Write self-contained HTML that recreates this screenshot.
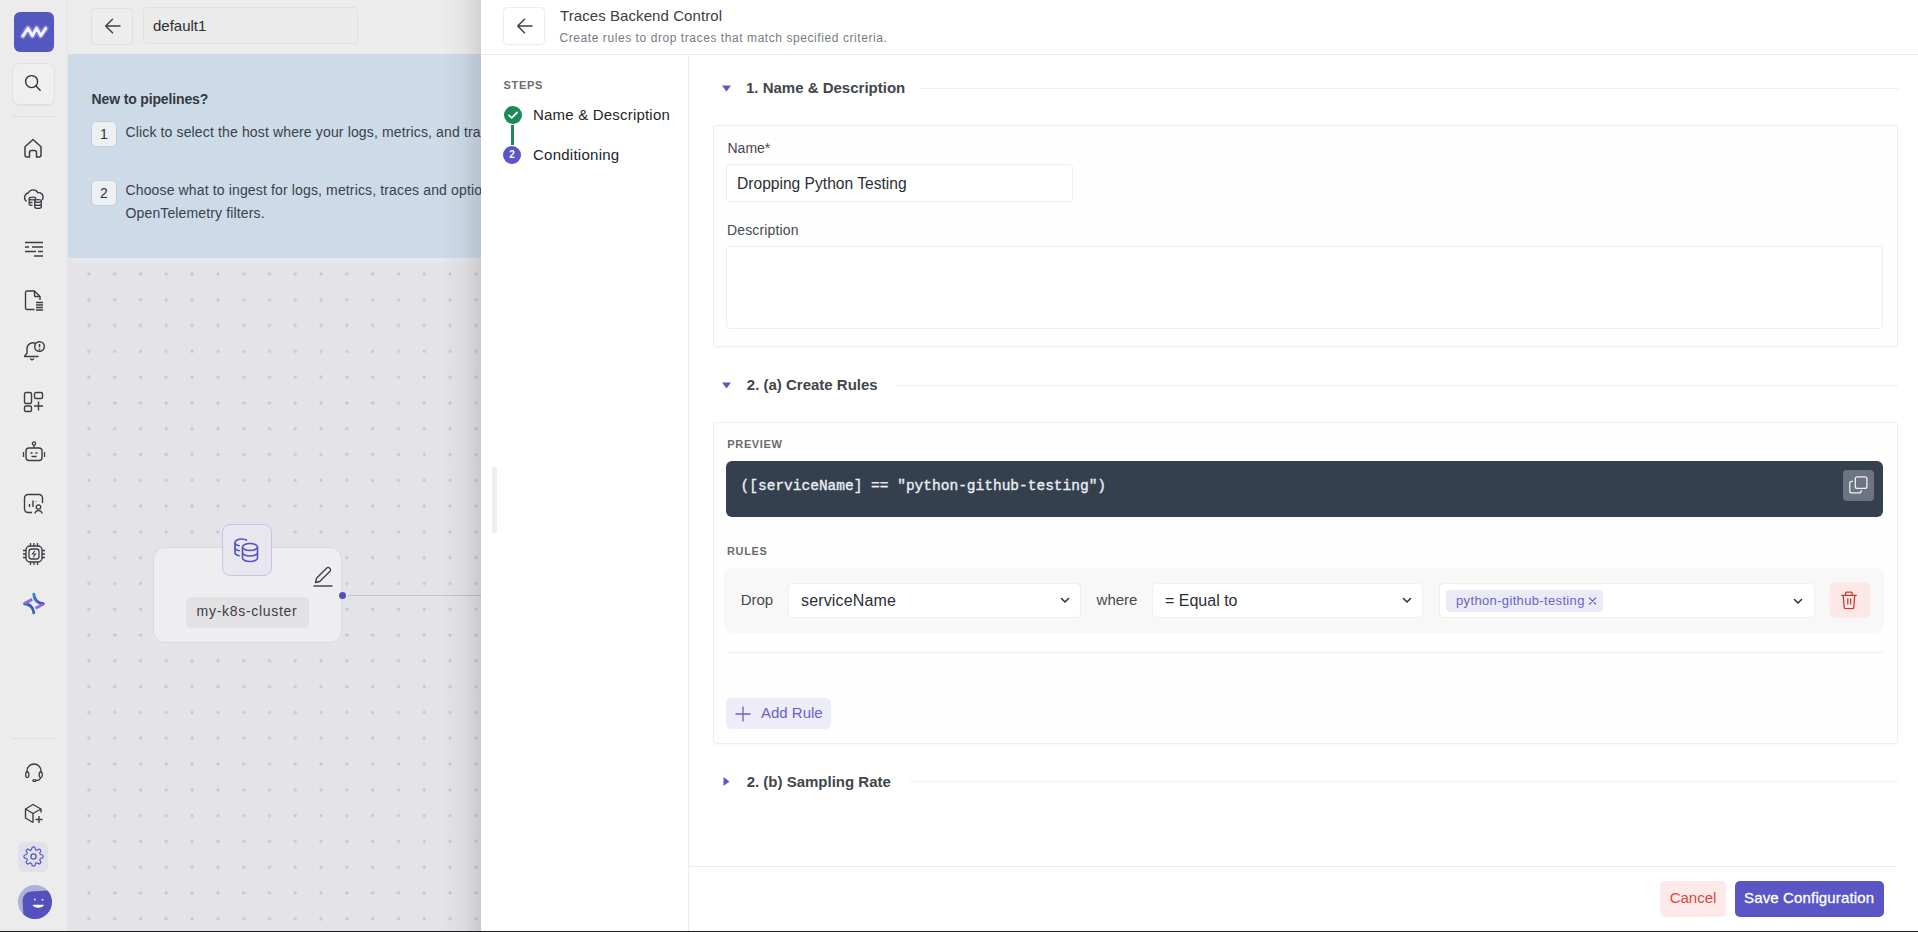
<!DOCTYPE html>
<html><head><meta charset="utf-8">
<style>
*{box-sizing:border-box;margin:0;padding:0}
html,body{width:1918px;height:932px;overflow:hidden;background:#fff;font-family:"Liberation Sans",sans-serif;color:#2b2f36}
.abs{position:absolute}
#side{left:0;top:0;width:68px;height:932px;background:#ececec;border-right:1px solid #e2e2e2}
#hdr{left:68px;top:0;width:413px;height:54px;background:#ececec}
#banner{left:68px;top:54px;width:413px;height:204px;background:#cddbe8}
#canvas{left:68px;top:258px;width:413px;height:674px;background-color:#e4e3e8;
 background-image:radial-gradient(circle,#c7c7cd 1.3px,transparent 1.9px);background-size:25.8px 25.8px;background-position:8px 3px}
#shadow{left:441px;top:0;width:40px;height:932px;background:linear-gradient(to right,rgba(0,0,0,0),rgba(0,0,0,0.03) 50%,rgba(0,0,0,0.11))}
#drawer{left:481px;top:0;width:1437px;height:932px;background:#fff}
.t{position:absolute;white-space:pre;line-height:1}
</style></head><body>
<div id="side" class="abs"></div>
<div id="hdr" class="abs"></div>
<div id="banner" class="abs"></div>
<div id="canvas" class="abs"></div>

<!-- sidebar -->
<div class="abs" style="left:14px;top:12px;width:40px;height:40px;border-radius:6px;background:#5557c0"></div>
<svg class="abs" style="left:14px;top:12px" width="40" height="40" viewBox="0 0 40 40"><path d="M9 24L14 16.2l4.3 7.5 4.3-7.5 4.2 7.5 4.9-7.3" fill="none" stroke="#8f8de0" stroke-width="6" stroke-linecap="round" stroke-linejoin="round" opacity="0.75"/><path d="M9 24L14 16.2l4.3 7.5 4.3-7.5 4.2 7.5 4.9-7.3" fill="none" stroke="#f4f5ff" stroke-width="2.9" stroke-linecap="round" stroke-linejoin="round"/></svg>
<div class="abs" style="left:12px;top:63px;width:43px;height:42px;border-radius:7px;background:#efefef;border:1px solid #e0e0e0;box-shadow:0 1px 1px rgba(0,0,0,0.04)"></div>
<svg class="abs" style="left:23px;top:73px" width="20" height="20" viewBox="0 0 20 20"><circle cx="8.6" cy="8.6" r="6" fill="none" stroke="#2e3138" stroke-width="1.4"/><path d="M13 13l4.2 4.2" stroke="#2e3138" stroke-width="1.4" stroke-linecap="round"/></svg>
<div class="abs" style="left:12px;top:116px;width:44px;height:1px;background:#dedede"></div>
<svg class="abs" style="left:23px;top:138px" width="20" height="20" viewBox="0 0 20 20"><path d="M2 8.8L10 1.5l8 7.3V17a2 2 0 0 1-2 2h-2.5v-4.5a2 2 0 0 0-2-2h-3a2 2 0 0 0-2 2V19H4a2 2 0 0 1-2-2z" fill="none" stroke="#3a3d44" stroke-width="1.5" stroke-linejoin="round"/></svg>
<svg class="abs" style="left:23px;top:188px" width="22" height="22" viewBox="0 0 22 22"><path d="M3.5 13.5A4.8 4.8 0 0 1 5.2 5 5.5 5.5 0 0 1 15 4.8a4 4 0 0 1 5 4.2 3.8 3.8 0 0 1-1 3" fill="none" stroke="#3a3d44" stroke-width="1.4"/><ellipse cx="9.5" cy="10.5" rx="3.3" ry="1.4" fill="#ececec" stroke="#3a3d44" stroke-width="1.3"/><path d="M6.2 10.5v5.5c0 .8 1.5 1.4 3.3 1.4M6.2 13.2c0 .8 1.5 1.4 3.3 1.4" fill="none" stroke="#3a3d44" stroke-width="1.3"/><ellipse cx="15" cy="13" rx="3.3" ry="1.4" fill="#ececec" stroke="#3a3d44" stroke-width="1.3"/><path d="M11.7 13v6c0 .8 1.5 1.4 3.3 1.4s3.3-.6 3.3-1.4v-6M11.7 16c0 .8 1.5 1.4 3.3 1.4s3.3-.6 3.3-1.4" fill="none" stroke="#3a3d44" stroke-width="1.3"/></svg>
<svg class="abs" style="left:24px;top:240px" width="20" height="20" viewBox="0 0 20 20"><path d="M1 2.5h18M1 7h4M8 7h11M1 11.5h11M14 11.5h5M10 16h9" fill="none" stroke="#3a3d44" stroke-width="1.5"/></svg>
<svg class="abs" style="left:24px;top:290px" width="20" height="22" viewBox="0 0 20 22"><path d="M10.5 19.5H3a1.5 1.5 0 0 1-1.5-1.5V2.5A1.5 1.5 0 0 1 3 1h7.5l5.5 5.5V10M10.5 1v4.5a1 1 0 0 0 1 1H16" fill="none" stroke="#3a3d44" stroke-width="1.4" stroke-linejoin="round"/><path d="M12 12.5h7M12 15h7M12 17.5h7M12 20h7" stroke="#3a3d44" stroke-width="1.3"/></svg>
<svg class="abs" style="left:22px;top:340px" width="24" height="22" viewBox="0 0 24 22"><path d="M13.5 3.3A6 6 0 0 0 5 8.5v4.5L2.5 16.5h14" fill="none" stroke="#3a3d44" stroke-width="1.4" stroke-linejoin="round"/><path d="M8 18.5l2 1.5 2-1.5" fill="none" stroke="#3a3d44" stroke-width="1.3"/><circle cx="17.5" cy="6.5" r="4.8" fill="none" stroke="#3a3d44" stroke-width="1.4"/><path d="M17.5 4v3.3" stroke="#3a3d44" stroke-width="1.5"/><circle cx="17.5" cy="9.2" r=".8" fill="#3a3d44"/></svg>
<svg class="abs" style="left:23px;top:391px" width="22" height="22" viewBox="0 0 22 22"><rect x="1.5" y="1.5" width="7" height="11" rx="1.5" fill="none" stroke="#3a3d44" stroke-width="1.4"/><rect x="11.5" y="1.5" width="8" height="6" rx="1.5" fill="none" stroke="#3a3d44" stroke-width="1.4"/><rect x="1.5" y="15" width="7" height="5.5" rx="1.5" fill="none" stroke="#3a3d44" stroke-width="1.4"/><path d="M15.5 10.5v9M11 15h9" stroke="#3a3d44" stroke-width="1.4"/></svg>
<svg class="abs" style="left:22px;top:441px" width="24" height="22" viewBox="0 0 24 22"><circle cx="12" cy="2.5" r="1.6" fill="none" stroke="#3a3d44" stroke-width="1.3"/><path d="M12 4v3" stroke="#3a3d44" stroke-width="1.3"/><rect x="4" y="7" width="16" height="12.5" rx="3" fill="none" stroke="#3a3d44" stroke-width="1.4"/><path d="M1.5 11v5M22.5 11v5M8.5 12h2M13.5 12h2M9.5 15.5h5" stroke="#3a3d44" stroke-width="1.3"/></svg>
<svg class="abs" style="left:23px;top:493px" width="22" height="22" viewBox="0 0 22 22"><path d="M9 19.5H5a3.5 3.5 0 0 1-3.5-3.5V5A3.5 3.5 0 0 1 5 1.5h11A3.5 3.5 0 0 1 19.5 5v5" fill="none" stroke="#3a3d44" stroke-width="1.4"/><path d="M6.5 14v-3M10 14V7.5M13 8v.5" stroke="#3a3d44" stroke-width="1.4"/><circle cx="15.5" cy="14" r="2.2" fill="none" stroke="#3a3d44" stroke-width="1.3"/><path d="M11.8 20.5a3.8 3.8 0 0 1 7.4 0" fill="none" stroke="#3a3d44" stroke-width="1.3"/></svg>
<svg class="abs" style="left:22px;top:542px" width="24" height="24" viewBox="0 0 24 24"><rect x="4" y="4" width="16" height="16" rx="4" fill="none" stroke="#3a3d44" stroke-width="1.4"/><rect x="7" y="7" width="10" height="10" rx="2.5" fill="none" stroke="#3a3d44" stroke-width="1.3"/><path d="M12.8 8.8L10.5 12h3l-2.3 3.2" fill="none" stroke="#3a3d44" stroke-width="1.1"/><path d="M8.5 1v3M12 1v3M15.5 1v3M8.5 20v3M12 20v3M15.5 20v3M1 8.5h3M1 12h3M1 15.5h3M20 8.5h3M20 12h3M20 15.5h3" stroke="#3a3d44" stroke-width="1.3"/></svg>
<svg class="abs" style="left:18px;top:588px" width="32" height="32" viewBox="0 0 32 32"><defs><linearGradient id="g1" x1="0" y1="0" x2="1" y2="1"><stop offset="0" stop-color="#2f86d8"/><stop offset="1" stop-color="#5a3fb8"/></linearGradient><linearGradient id="g2" x1="1" y1="0" x2="0" y2="1"><stop offset="0" stop-color="#4a3fb8"/><stop offset="1" stop-color="#2f86d8"/></linearGradient></defs><path d="M15.8 6.2Q16.5 14.8 25.2 15.8" fill="none" stroke="url(#g1)" stroke-width="2.9" stroke-linecap="round"/><path d="M25 16.2L17.6 20.2" fill="none" stroke="#8b6fd6" stroke-width="2.9"/><path d="M6.6 15.8Q15 16.8 15.8 24.8" fill="none" stroke="url(#g2)" stroke-width="2.9" stroke-linecap="round"/><path d="M6.8 15.4L14.2 11.4" fill="none" stroke="#8b6fd6" stroke-width="2.9"/></svg>
<div class="abs" style="left:12px;top:738px;width:44px;height:1px;background:#dedede"></div>
<svg class="abs" style="left:24px;top:762px" width="20" height="20" viewBox="0 0 20 20"><path d="M3 11V9a7 7 0 0 1 14 0v2" fill="none" stroke="#3a3d44" stroke-width="1.4"/><rect x="1.8" y="10" width="3" height="5.5" rx="1.5" fill="none" stroke="#3a3d44" stroke-width="1.3"/><rect x="15.2" y="10" width="3" height="5.5" rx="1.5" fill="none" stroke="#3a3d44" stroke-width="1.3"/><path d="M16.5 15.5c0 2-2 3-5 3" fill="none" stroke="#3a3d44" stroke-width="1.3"/><ellipse cx="10.3" cy="18.5" rx="1.5" ry="1" fill="none" stroke="#3a3d44" stroke-width="1.2"/></svg>
<svg class="abs" style="left:24px;top:803px" width="20" height="21" viewBox="0 0 20 21"><path d="M17 9.5V6L9 1.5 1.5 6v9L9 19.5" fill="none" stroke="#3a3d44" stroke-width="1.4" stroke-linejoin="round"/><path d="M1.5 6L9 10.5 17 6M9 10.5v9" fill="none" stroke="#3a3d44" stroke-width="1.4" stroke-linejoin="round"/><path d="M15 13v7M11.5 16.5h7" stroke="#3a3d44" stroke-width="1.4"/></svg>
<div class="abs" style="left:18px;top:842px;width:30px;height:30px;border-radius:6px;background:#e2e1e9"></div>
<svg class="abs" style="left:23px;top:846px" width="21" height="21" viewBox="0 0 24 24"><path d="M12 15a3 3 0 1 0 0-6 3 3 0 0 0 0 6z" fill="none" stroke="#5a55c8" stroke-width="1.5"/><path d="M19.4 15a1.65 1.65 0 0 0 .33 1.82l.06.06a2 2 0 0 1-2.83 2.83l-.06-.06a1.65 1.65 0 0 0-1.82-.33 1.65 1.65 0 0 0-1 1.51V21a2 2 0 0 1-4 0v-.09A1.65 1.65 0 0 0 9 19.4a1.65 1.65 0 0 0-1.82.33l-.06.06a2 2 0 0 1-2.83-2.83l.06-.06A1.65 1.65 0 0 0 4.68 15a1.65 1.65 0 0 0-1.51-1H3a2 2 0 0 1 0-4h.09A1.650 1.65 0 0 0 4.6 9a1.65 1.65 0 0 0-.33-1.82l-.06-.06a2 2 0 0 1 2.830-2.83l.06.06A1.65 1.65 0 0 0 9 4.68a1.65 1.65 0 0 0 1-1.51V3a2 2 0 0 1 4 0v.09a1.65 1.65 0 0 0 1 1.51 1.65 1.65 0 0 0 1.82-.33l.06-.06a2 2 0 0 1 2.83 2.83l-.06.06A1.65 1.65 0 0 0 19.4 9a1.65 1.65 0 0 0 1.51 1H21a2 2 0 0 1 0 4h-.09a1.65 1.65 0 0 0-1.51 1z" fill="none" stroke="#5a55c8" stroke-width="1.4"/></svg>
<div class="abs" style="left:18px;top:885px;width:34px;height:34px;border-radius:50%;background:#aeb0d8;overflow:hidden"><div style="position:absolute;left:5px;top:6px;width:34px;height:34px;border-radius:9px;background:#5450bd;transform:rotate(-3deg)"></div></div>
<svg class="abs" style="left:18px;top:885px" width="34" height="34" viewBox="0 0 34 34"><circle cx="16.8" cy="14.5" r="1" fill="#e8e8f8"/><circle cx="24.5" cy="14.8" r="1" fill="#e8e8f8"/><path d="M15.3 20.3c2.7 2.6 7.3 2.6 10 0z" fill="#fff" stroke="#fff" stroke-width="1.2" stroke-linejoin="round"/></svg>
<!-- top header -->
<div class="abs" style="left:91px;top:8px;width:42px;height:37px;border-radius:4px;border:1px solid #e0e0e0;background:#ededed"></div>
<svg class="abs" style="left:104px;top:17px" width="18" height="18" viewBox="0 0 18 18"><path d="M16 9H2M8.5 2.2L1.7 9l6.8 6.8" fill="none" stroke="#3d4148" stroke-width="1.5" stroke-linecap="round" stroke-linejoin="round"/></svg>
<div class="abs" style="left:143px;top:7px;width:215px;height:37px;border-radius:4px;border:1px solid #e0e0e0;background:#ebebeb"></div>
<div class="t" style="left:153px;top:18.3px;font-size:15px;color:#2a2d33">default1</div>
<!-- banner -->
<div class="t" style="left:91.6px;top:92.1px;font-size:14px;font-weight:700;color:#343942;letter-spacing:-0.15px">New to pipelines?</div>
<div class="abs" style="left:91px;top:121px;width:26px;height:26px;border-radius:5px;border:1px solid #c9ced6;background:#edf0f3;font-size:14px;color:#2d3138;text-align:center;line-height:24px">1</div>
<div class="t" style="left:125.5px;top:125.1px;font-size:14px;color:#3a414b;letter-spacing:0.14px">Click to select the host where your logs, metrics, and traces are collected.</div>
<div class="abs" style="left:91px;top:180px;width:26px;height:26px;border-radius:5px;border:1px solid #c9ced6;background:#edf0f3;font-size:14px;color:#2d3138;text-align:center;line-height:24px">2</div>
<div class="t" style="left:125.5px;top:183.1px;font-size:14px;color:#3a414b;letter-spacing:0.14px">Choose what to ingest for logs, metrics, traces and optional</div>
<div class="t" style="left:125.5px;top:206.1px;font-size:14px;color:#3a414b;letter-spacing:0.14px">OpenTelemetry filters.</div>
<!-- canvas node -->
<div class="abs" style="left:348px;top:594.5px;width:133px;height:1.3px;background:#c3c3cc"></div>
<div class="abs" style="left:153px;top:547px;width:189px;height:96px;border-radius:12px;border:1px solid #d9d9e2;background:#eeeef0"></div>
<div class="abs" style="left:222px;top:524px;width:50px;height:52px;border-radius:8px;border:1px solid #c8c5e3;background:#e8e7ef"></div>
<svg class="abs" style="left:233px;top:536px" width="28" height="28" viewBox="0 0 28 28"><path d="M14 4.5c-1.2-.9-3-1.5-5-1.5C5.1 3 2 4.6 2 6.5v10c0 1.6 2 2.9 4.8 3.3" fill="none" stroke="#5450bd" stroke-width="1.6"/><path d="M2 11.5c0 1.6 2 2.9 4.8 3.3M2 6.5c0 1.6 2 2.9 4.8 3.3" fill="none" stroke="#5450bd" stroke-width="1.6"/><ellipse cx="17" cy="11" rx="7.5" ry="3.5" fill="#e8e7ef" stroke="#5450bd" stroke-width="1.6"/><path d="M9.5 11v11c0 1.9 3.4 3.5 7.5 3.5s7.5-1.6 7.5-3.5V11M9.5 16.5c0 1.9 3.4 3.5 7.5 3.5s7.5-1.6 7.5-3.5" fill="none" stroke="#5450bd" stroke-width="1.6"/></svg>
<svg class="abs" style="left:312px;top:566px" width="22" height="22" viewBox="0 0 22 22"><path d="M3.5 16.5l1-4.2L14.8 2a1.8 1.8 0 0 1 2.6 0l.6.6a1.8 1.8 0 0 1 0 2.6L7.7 15.5z" fill="none" stroke="#3a3d44" stroke-width="1.3" stroke-linejoin="round"/><path d="M1.5 20h19" stroke="#3a3d44" stroke-width="1.4"/></svg>
<div class="abs" style="left:186px;top:597px;width:123px;height:31px;border-radius:5px;background:#e2e2e5"></div>
<div class="t" style="left:196.6px;top:604.1px;font-size:14px;color:#3a3d44;letter-spacing:0.7px">my-k8s-cluster</div>
<div class="abs" style="left:339px;top:592px;width:7px;height:7px;border-radius:50%;background:#5450b8"></div>
<div class="abs" style="left:68px;top:258px;width:413px;height:6px;background:linear-gradient(#e9e8ec,#e4e3e8)"></div>
<div class="abs" style="left:68px;top:46px;width:413px;height:8px;background:#ededed"></div>
<div id="shadow" class="abs"></div>
<div id="drawer" class="abs"></div>

<!-- drawer header -->
<div class="abs" style="left:481px;top:54px;width:1437px;height:1px;background:#ececec"></div>
<div class="abs" style="left:503px;top:7px;width:42px;height:38px;border:1px solid #ededed;border-radius:4px;background:#fff"></div>
<svg class="abs" style="left:516px;top:17px" width="18" height="18" viewBox="0 0 18 18"><path d="M16 9H2M8.5 2.2L1.7 9l6.8 6.8" fill="none" stroke="#3d4148" stroke-width="1.5" stroke-linecap="round" stroke-linejoin="round"/></svg>
<div class="t" style="left:560px;top:7.9px;font-size:15px;color:#3b3e44;letter-spacing:0.08px">Traces Backend Control</div>
<div class="t" style="left:559.5px;top:31.8px;font-size:12px;color:#767b82;letter-spacing:0.57px">Create rules to drop traces that match specified criteria.</div>
<!-- steps -->
<div class="abs" style="left:688px;top:55px;width:1px;height:877px;background:#ececec"></div>
<div class="t" style="left:503.5px;top:79.7px;font-size:11px;font-weight:700;color:#6c6c6c;letter-spacing:0.7px">STEPS</div>
<div class="abs" style="left:504px;top:106px;width:18px;height:18px;border-radius:50%;background:#1c8a57"></div>
<svg class="abs" style="left:504px;top:106px" width="18" height="18" viewBox="0 0 18 18"><path d="M5 9.3l2.7 2.6L13 6.5" fill="none" stroke="#fff" stroke-width="1.8" stroke-linecap="round" stroke-linejoin="round"/></svg>
<div class="abs" style="left:511px;top:125px;width:3px;height:20px;background:#1c8a57"></div>
<div class="abs" style="left:503px;top:146px;width:18px;height:18px;border-radius:50%;background:#5b56c4;color:#fff;font-size:10px;font-weight:700;text-align:center;line-height:18px">2</div>
<div class="t" style="left:533px;top:107.3px;font-size:15px;color:#22252b;letter-spacing:0.2px">Name &amp; Description</div>
<div class="t" style="left:533px;top:147.1px;font-size:15px;color:#22252b;letter-spacing:0.25px">Conditioning</div>
<!-- section 1 -->
<svg class="abs" style="left:721px;top:84px" width="11" height="8" viewBox="0 0 11 8"><path d="M1 1.5h9L5.5 7.5z" fill="#5f57c4"/></svg>
<div class="t" style="left:746px;top:80.3px;font-size:15px;font-weight:700;color:#42454b">1. Name &amp; Description</div>
<div class="abs" style="left:920px;top:88px;width:978px;height:1px;background:#efefef"></div>
<div class="abs" style="left:713px;top:125px;width:1185px;height:222px;border:1px solid #efefef;border-radius:3px;background:#fefefe;box-shadow:0 1px 2px rgba(0,0,0,0.03)"></div>
<div class="t" style="left:727.5px;top:141.1px;font-size:14px;color:#45484e">Name*</div>
<div class="abs" style="left:726px;top:164px;width:347px;height:38px;border:1px solid #eeeeee;border-radius:4px;background:#fff"></div>
<div class="t" style="left:737px;top:176.1px;font-size:15.6px;color:#2c2f35">Dropping Python Testing</div>
<div class="t" style="left:727px;top:223.1px;font-size:14px;color:#45484e;letter-spacing:0.15px">Description</div>
<div class="abs" style="left:726px;top:246px;width:1157px;height:83px;border:1px solid #eeeeee;border-radius:4px;background:#fff"></div>
<!-- section 2a -->
<svg class="abs" style="left:721px;top:381px" width="11" height="8" viewBox="0 0 11 8"><path d="M1 1.5h9L5.5 7.5z" fill="#5f57c4"/></svg>
<div class="t" style="left:746.8px;top:377.3px;font-size:15px;font-weight:700;color:#42454b">2. (a) Create Rules</div>
<div class="abs" style="left:896px;top:385px;width:1002px;height:1px;background:#efefef"></div>
<div class="abs" style="left:713px;top:422px;width:1185px;height:322px;border:1px solid #efefef;border-radius:3px;background:#fefefe;box-shadow:0 1px 2px rgba(0,0,0,0.03)"></div>
<div class="t" style="left:727.3px;top:438.7px;font-size:11px;font-weight:700;color:#6c6c6c;letter-spacing:0.65px">PREVIEW</div>
<div class="abs" style="left:726px;top:461px;width:1157px;height:56px;border-radius:6px;background:#35404f"></div>
<div class="t" style="left:740.6px;top:479px;font-family:'Liberation Mono',monospace;font-size:14.5px;color:#eceef2;-webkit-text-stroke:0.35px #eceef2">([serviceName] == "python-github-testing")</div>
<div class="abs" style="left:1843px;top:470px;width:31px;height:31px;border-radius:4px;background:#6b7480"></div>
<svg class="abs" style="left:1843px;top:470px" width="31" height="31" viewBox="0 0 31 31"><rect x="12.3" y="6.8" width="11.6" height="11.6" rx="2" fill="none" stroke="#eef0f3" stroke-width="1.25"/><path d="M10 11.3H8.8a2 2 0 0 0-2 2v7.6a2 2 0 0 0 2 2h7.4a2 2 0 0 0 2-2V20" fill="none" stroke="#eef0f3" stroke-width="1.25"/></svg>
<div class="t" style="left:727px;top:546.4px;font-size:11px;font-weight:700;color:#6c6c6c;letter-spacing:0.65px">RULES</div>
<div class="abs" style="left:724px;top:568px;width:1160px;height:65px;border-radius:8px;background:#f8f8f8"></div>
<div class="t" style="left:740.7px;top:592.2px;font-size:15px;color:#45484e">Drop</div>
<div class="abs" style="left:788px;top:583px;width:293px;height:35px;border:1px solid #efefef;border-radius:5px;background:#fff"></div>
<div class="t" style="left:801px;top:593.1px;font-size:16px;color:#2c2f35;letter-spacing:0.15px">serviceName</div>
<svg class="abs" style="left:1059px;top:594px" width="12" height="12" viewBox="0 0 12 12"><path d="M2.5 4.5L6 8l3.5-3.5" fill="none" stroke="#2c2f35" stroke-width="1.5" stroke-linecap="round" stroke-linejoin="round"/></svg>
<div class="t" style="left:1096.6px;top:592.2px;font-size:15px;color:#45484e">where</div>
<div class="abs" style="left:1152px;top:583px;width:271px;height:35px;border:1px solid #efefef;border-radius:5px;background:#fff"></div>
<div class="t" style="left:1165px;top:592.5px;font-size:16px;color:#2c2f35">= Equal to</div>
<svg class="abs" style="left:1401px;top:594px" width="12" height="12" viewBox="0 0 12 12"><path d="M2.5 4.5L6 8l3.5-3.5" fill="none" stroke="#2c2f35" stroke-width="1.5" stroke-linecap="round" stroke-linejoin="round"/></svg>
<div class="abs" style="left:1439px;top:583px;width:376px;height:35px;border:1px solid #efefef;border-radius:5px;background:#fff"></div>
<div class="abs" style="left:1446px;top:590px;width:157px;height:22px;border-radius:4px;background:#ebeaf7"></div>
<div class="t" style="left:1456px;top:594.1px;font-size:13px;color:#6c64c4;letter-spacing:0.35px">python-github-testing</div>
<svg class="abs" style="left:1587px;top:595px" width="11" height="11" viewBox="0 0 11 11"><path d="M2.3 2.8l6.4 6.4M8.7 2.8l-6.4 6.4" fill="none" stroke="#5f57c4" stroke-width="1.15" stroke-linecap="round"/></svg>
<svg class="abs" style="left:1792px;top:595px" width="12" height="12" viewBox="0 0 12 12"><path d="M2.5 4.5L6 8l3.5-3.5" fill="none" stroke="#2c2f35" stroke-width="1.5" stroke-linecap="round" stroke-linejoin="round"/></svg>
<div class="abs" style="left:1829px;top:582px;width:41px;height:36px;border-radius:5px;background:#fde8e8"></div>
<svg class="abs" style="left:1839px;top:590px" width="20" height="20" viewBox="0 0 20 20"><path d="M2.2 5.4h15.6M6.6 5.2V3a1 1 0 0 1 1-1h4.6a1 1 0 0 1 1 1v2.2M4.2 5.6l1 12a1 1 0 0 0 1 .9h7.5a1 1 0 0 0 1-.9l1-12M8.8 8.6v6M11.6 8.6v6" fill="none" stroke="#c8372c" stroke-width="1.25" stroke-linejoin="round"/></svg>
<div class="abs" style="left:728px;top:652px;width:1155px;height:1px;background:#efefef"></div>
<div class="abs" style="left:726px;top:698px;width:105px;height:31px;border-radius:5px;background:#edecf8"></div>
<svg class="abs" style="left:734px;top:705px" width="18" height="18" viewBox="0 0 18 18"><path d="M9 1.5v15M1.5 9h15" fill="none" stroke="#6a62c4" stroke-width="1.3"/></svg>
<div class="t" style="left:761px;top:705.3px;font-size:15px;color:#6a62c4">Add Rule</div>
<!-- section 2b -->
<svg class="abs" style="left:722px;top:776px" width="8" height="11" viewBox="0 0 8 11"><path d="M1.5 1v9L7.5 5.5z" fill="#5f57c4"/></svg>
<div class="t" style="left:746.7px;top:774.2px;font-size:15px;font-weight:700;color:#42454b">2. (b) Sampling Rate</div>
<div class="abs" style="left:910px;top:781px;width:988px;height:1px;background:#efefef"></div>
<!-- footer -->
<div class="abs" style="left:689px;top:866px;width:1208px;height:1px;background:#ececec"></div>
<div class="abs" style="left:1660px;top:881px;width:66px;height:36px;border-radius:5px;background:#fde9e9"></div>
<div class="t" style="left:1669.7px;top:890.3px;font-size:15px;color:#d24b3c">Cancel</div>
<div class="abs" style="left:1735px;top:881px;width:149px;height:36px;border-radius:5px;background:#5a56c6"></div>
<div class="t" style="left:1744px;top:890.3px;font-size:15px;color:#fff;letter-spacing:0.15px;-webkit-text-stroke:0.3px #fff">Save Configuration</div>
<div class="abs" style="left:492px;top:467px;width:5px;height:66px;border-radius:3px;background:#eeeeee"></div>
<div class="abs" style="left:0;top:931px;width:1918px;height:1px;background:#1c1c1c"></div>
</body></html>
